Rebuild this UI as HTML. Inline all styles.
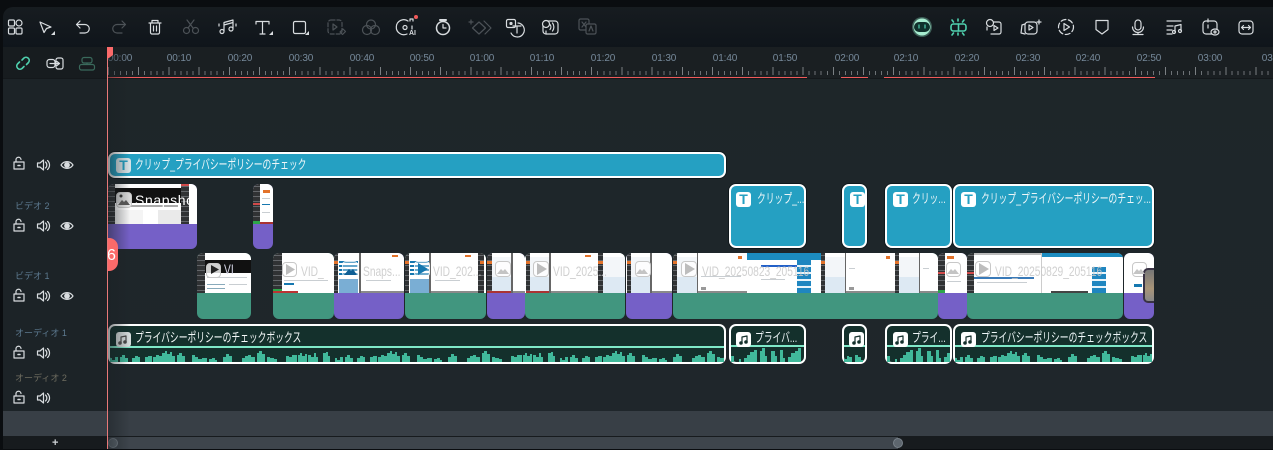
<!DOCTYPE html>
<html lang="ja"><head><meta charset="utf-8"><title>Timeline</title>
<style>
*{box-sizing:border-box}
html,body{margin:0;padding:0;width:1273px;height:449px;overflow:hidden;background:#0a0d10;font-family:"Liberation Sans","Noto Sans CJK JP",sans-serif}
div,span,svg{position:absolute}
#tb{left:3px;top:7px;width:1270px;height:40px;background:linear-gradient(#171c20,#0f151b);border-radius:10px 0 0 0}
#ctl{left:3px;top:47px;width:104px;height:31px;background:#171c1f}
#rul{left:108px;top:47px;width:1165px;height:31px;background:#1a1f22;overflow:hidden}
#tk1{left:0;top:24px;width:1165px;height:4px;background:repeating-linear-gradient(90deg,#6d7276 0 1px,transparent 1px 6.04px)}
#tk2{left:0;top:20px;width:1165px;height:8px;background:repeating-linear-gradient(90deg,#7a7f83 0 1px,transparent 1px 30.2px)}
.rl{top:5px;font-size:10px;color:#76899a;transform:translateX(-50%);white-space:nowrap;line-height:13px;letter-spacing:-.1px}
.rd{top:77px;height:2px;background:#f05a5a}
#lft{left:3px;top:78px;width:104px;height:358px;background:#1c2327}
#trk{left:108px;top:78px;width:1165px;height:333px;background:linear-gradient(#1e2629,#1f262b)}
.lb{left:15px;font-size:9px;line-height:12px;white-space:nowrap;color:#5d7a90}
.c{overflow:hidden;border-radius:6px}
.tc{background:#25a0c2;border:2px solid #fff;border-radius:7px;box-shadow:0 0 0 1px #10181c}
.ac{background:#14302c;border:2px solid #fff;border-radius:7px;overflow:hidden}
.ic{width:15px;height:15px;border-radius:3px;background:#fff;color:#25a0c2;font:bold 14px/15px "Liberation Sans",sans-serif;text-align:center}
.tx{color:#eef6f8;font-size:13px;line-height:16px;white-space:nowrap;transform-origin:0 50%;transform:scaleX(.675)}
.f{top:0;height:40px;overflow:hidden;background:#fff}
.d{top:0;height:40px;background:repeating-linear-gradient(#303234 0 2px,#63666a 2px 3px,#303234 3px 5px)}
.g{top:38px;height:2px;background:#8a8a8a}
.k{background:#111}
.l{background:#c9ced2;height:1px}
.bl{top:0;height:40px;background:linear-gradient(#fff 0 4px,#f3f6f9 4px 24px,#dde9f3 24px)}
.o{background:#e2722a;height:3px;width:7px}
.pb{width:16px;height:16px;top:8px;border:1px solid #c8c8c8;border-radius:4px;background:rgba(255,255,255,.8)}
.vt{font-size:14px;line-height:16px;color:rgba(200,200,200,.85);white-space:nowrap;transform-origin:0 50%;transform:scaleX(.73);top:10px}
.cb{background:repeating-linear-gradient(#1f86c0 0 5px,#e8f4fa 5px 7px)}
</style></head><body>
<div id="tb"></div>
<div id="ctl"></div>
<div id="rul">
<div id="tk1"></div><div id="tk2"></div>
<span class="rl" style="left:12px">00:00</span><span class="rl" style="left:71px">00:10</span><span class="rl" style="left:132px">00:20</span><span class="rl" style="left:193px">00:30</span><span class="rl" style="left:254px">00:40</span><span class="rl" style="left:314px">00:50</span><span class="rl" style="left:374px">01:00</span><span class="rl" style="left:434px">01:10</span><span class="rl" style="left:495px">01:20</span><span class="rl" style="left:556px">01:30</span><span class="rl" style="left:617px">01:40</span><span class="rl" style="left:677px">01:50</span><span class="rl" style="left:739px">02:00</span><span class="rl" style="left:798px">02:10</span><span class="rl" style="left:859px">02:20</span><span class="rl" style="left:920px">02:30</span><span class="rl" style="left:980px">02:40</span><span class="rl" style="left:1041px">02:50</span><span class="rl" style="left:1102px">03:00</span><span class="rl" style="left:1166px">03:10</span>
</div>
<div class="rd" style="left:108px;width:699px"></div><div class="rd" style="left:841px;width:27px"></div><div class="rd" style="left:884px;width:271px"></div>
<div id="lft"></div><div id="trk"></div>
<div style="left:3px;top:78px;width:1270px;height:1px;background:#14181b"></div>
<div style="left:3px;top:411px;width:1270px;height:25px;background:#383f46"></div>
<div style="left:3px;top:436px;width:1270px;height:13px;background:#171b1e"></div>
<div style="left:108px;top:437px;width:790px;height:12px;background:#3e454c"></div>
<div style="left:108px;top:438px;width:10px;height:10px;border-radius:50%;background:#5d666e;border:1px solid #79828a"></div>
<div style="left:893px;top:438px;width:10px;height:10px;border-radius:50%;background:#5d666e;border:1px solid #79828a"></div>
<span style="left:52px;top:437px;color:#cfd3d6;font-size:11px;line-height:13px;font-weight:bold">+</span>

<span class="lb" style="top:200px">ビデオ 2</span>
<span class="lb" style="top:270px">ビデオ 1</span>
<span class="lb" style="top:327px">オーディオ 1</span>
<span class="lb" style="top:372px;color:#6f6d60">オーディオ 2</span>

<!-- title clip -->
<div class="tc" style="left:108px;top:152px;width:618px;height:26px"></div>
<div class="ic" style="left:116px;top:158px;background:#d7e2e6">T</div>
<span class="tx" style="left:135px;top:157px">クリップ_プライバシーポリシーのチェック</span>

<!-- video 2 -->
<div class="c" style="left:108px;top:184px;width:89px;height:65px;background:#7560c7">
 <div class="f" style="left:0;width:89px"><div class="d" style="left:0;width:7px"></div><div class="k" style="left:7px;top:4px;width:66px;height:15px"></div><div style="left:10px;top:21px;width:60px;height:2px;background:#aaa"></div><div style="left:7px;top:26px;width:28px;height:14px;background:#f4f4f4"></div><div style="left:50px;top:26px;width:23px;height:14px;background:#eaeaea"></div><div class="d" style="left:73px;width:8px"></div><div style="left:73px;top:0;width:8px;height:2px;background:#d14a4a"></div></div>
 <div class="pb" style="left:8px;top:8px;background:rgba(240,240,240,.9)"></div>
 <span class="vt" style="left:27px;top:8px;color:#fff;transform:none;letter-spacing:.6px">Snapshot_5</span>
</div>
<div class="c" style="left:253px;top:184px;width:20px;height:65px;background:#7560c7">
 <div class="f" style="left:0;width:20px"><div class="d" style="left:0;width:7px"></div><div class="o" style="left:10px;top:6px"></div><div class="l" style="left:9px;top:14px;width:8px"></div><div class="l" style="left:9px;top:20px;width:8px;background:#1678b0"></div><div class="l" style="left:9px;top:28px;width:8px"></div><div style="left:0;top:37px;width:7px;height:3px;background:#2da64a"></div><div style="left:0;top:19px;width:7px;height:2px;background:#d14a4a"></div><div style="left:7px;top:38px;width:13px;height:2px;background:#a33"></div></div>
</div>

<!-- video 1 -->
<div class="c" style="left:197px;top:253px;width:54px;height:66px;background:#41967f">
 <div class="f" style="left:0;width:54px"><div class="d" style="left:0;width:8px"></div><div class="k" style="left:8px;top:7px;width:46px;height:13px"></div><div class="l" style="left:10px;top:24px;width:40px"></div><div class="l" style="left:10px;top:31px;width:18px;background:#8ab"></div><div class="l" style="left:32px;top:31px;width:18px"></div><div class="l" style="left:10px;top:35px;width:18px;background:#8ab"></div></div>
 <div class="pb" style="left:9px;top:10px;width:15px;height:15px"></div>
 <span class="vt" style="left:27px;top:8px;color:#dde">VI</span>
</div>
<div class="c" style="left:273px;top:253px;width:61px;height:66px;background:#41967f">
 <div class="f" style="left:0;width:61px"><div class="d" style="left:0;width:9px"></div><div class="l" style="left:11px;top:27px;width:44px"></div><div style="left:0;top:38px;width:25px;height:2px;background:#b33"></div><div style="left:0;top:36px;width:9px;height:2px;background:#2da64a"></div><div class="l" style="left:11px;top:30px;width:10px;background:#1678b0;height:2px"></div></div>
 <div class="pb" style="left:9px;top:9px;width:15px;height:15px"></div><span class="vt" style="left:28px">VID_</span>
</div>
<div class="c" style="left:334px;top:253px;width:70px;height:66px;background:#7560c7">
 <div class="f" style="left:0;width:70px"><div class="d" style="left:0;width:4px"></div><div class="o" style="left:0;top:8px;width:4px"></div><div style="left:5px;top:8px;width:19px;height:16px;background:repeating-linear-gradient(#1678b0 0 2px,#fff 2px 4px)"></div><div style="left:5px;top:26px;width:19px;height:14px;background:#7aaed4"></div><div style="left:25px;top:0;width:2px;height:40px;background:#666"></div><div class="l" style="left:32px;top:27px;width:25px"></div><div class="g" style="left:27px;width:43px"></div><div style="left:58px;top:2px;width:6px;height:2px;background:#e2722a"></div></div>
 <div class="pb" style="left:8px;top:8px;background:rgba(255,255,255,.35);border-color:rgba(255,255,255,.7)"></div><span class="vt" style="left:29px">Snaps...</span>
</div>
<div class="c" style="left:405px;top:253px;width:81px;height:66px;background:#41967f">
 <div class="f" style="left:0;width:81px"><div class="d" style="left:0;width:4px"></div><div class="o" style="left:0;top:8px;width:4px"></div><div style="left:5px;top:8px;width:19px;height:16px;background:repeating-linear-gradient(#1678b0 0 2px,#fff 2px 4px)"></div><div style="left:5px;top:26px;width:19px;height:14px;background:#7aaed4"></div><div style="left:24px;top:0;width:2px;height:40px;background:#666"></div><div class="d" style="left:73px;width:6px"></div><div class="o" style="left:75px;top:8px;width:4px"></div><div class="l" style="left:30px;top:27px;width:25px"></div><div class="g" style="left:26px;width:47px"></div><div style="left:60px;top:2px;width:6px;height:2px;background:#e2722a"></div></div>
 <div class="pb" style="left:9px;top:8px;background:rgba(255,255,255,.4);border-color:rgba(255,255,255,.8)"></div><span class="vt" style="left:28px">VID_202...</span>
</div>
<div class="c" style="left:487px;top:253px;width:38px;height:66px;background:#7560c7">
 <div class="f" style="left:0;width:38px"><div class="d" style="left:0;width:5px"></div><div class="o" style="left:0;top:8px;width:5px"></div><div class="bl" style="left:5px;width:19px"></div><div class="d" style="left:24px;width:2px;background:#666"></div><div class="g" style="left:26px;width:12px"></div><div style="left:0;top:38px;width:24px;height:2px;background:#a33"></div></div>
 <div class="pb" style="left:8px"></div>
</div>
<div class="c" style="left:525px;top:253px;width:100px;height:66px;background:#41967f">
 <div class="f" style="left:0;width:100px"><div class="d" style="left:1px;width:4px"></div><div class="o" style="left:1px;top:8px;width:4px"></div><div class="bl" style="left:5px;width:19px"></div><div class="d" style="left:24px;width:2px;background:#666"></div><div class="d" style="left:73px;width:5px"></div><div class="o" style="left:73px;top:8px;width:5px"></div><div class="bl" style="left:78px;width:22px"></div><div class="g" style="left:26px;width:47px"></div><div style="left:1px;top:38px;width:23px;height:2px;background:#a33"></div><div style="left:60px;top:2px;width:6px;height:2px;background:#e2722a"></div></div>
 <div class="pb" style="left:8px"></div><span class="vt" style="left:28px">VID_2025...</span>
</div>
<div class="c" style="left:626px;top:253px;width:46px;height:66px;background:#7560c7">
 <div class="f" style="left:0;width:46px"><div class="d" style="left:1px;width:4px"></div><div class="o" style="left:1px;top:8px;width:4px"></div><div class="bl" style="left:5px;width:19px"></div><div class="d" style="left:24px;width:2px;background:#666"></div><div class="g" style="left:26px;width:20px"></div></div>
 <div class="pb" style="left:9px"></div>
</div>
<div class="c" style="left:673px;top:253px;width:265px;height:66px;background:#41967f">
 <div class="f" style="left:0;width:265px">
 <div class="d" style="left:0;width:4px"></div><div class="o" style="left:0;top:8px;width:4px"></div><div class="bl" style="left:4px;width:20px"></div><div class="d" style="left:24px;width:1px;background:#666"></div><div class="o" style="left:65px;top:3px;width:4px"></div><div class="g" style="left:25px;width:49px"></div><div class="l" style="left:28px;top:23px;width:40px"></div><div style="left:28px;top:34px;width:5px;height:3px;background:#999"></div>
 <div style="left:74px;top:0;width:74px;height:7px;background:#1c8cc0"></div><div style="left:124px;top:7px;width:14px;height:33px" class="cb"></div><div style="left:88px;top:12px;width:36px;height:2px;background:#2260c8"></div><div class="l" style="left:88px;top:26px;width:24px"></div>
 <div class="d" style="left:148px;width:4px"></div><div class="o" style="left:148px;top:8px;width:4px"></div><div class="bl" style="left:152px;width:20px"></div><div class="d" style="left:172px;width:1px;background:#666"></div><div class="g" style="left:173px;width:49px"></div><div class="o" style="left:213px;top:3px;width:4px"></div><div class="l" style="left:176px;top:15px;width:6px"></div><div style="left:176px;top:34px;width:5px;height:3px;background:#999"></div>
 <div class="d" style="left:222px;width:4px"></div><div class="o" style="left:222px;top:8px;width:4px"></div><div class="bl" style="left:226px;width:20px"></div><div class="d" style="left:246px;width:1px;background:#666"></div><div class="g" style="left:247px;width:18px"></div><div class="l" style="left:250px;top:15px;width:6px"></div>
 </div>
 <div class="pb" style="left:8px"></div><span class="vt" style="left:29px">VID_20250823_205116</span>
</div>
<div class="c" style="left:938px;top:253px;width:29px;height:66px;background:#7560c7">
 <div class="f" style="left:0;width:29px"><div class="d" style="left:0;width:7px"></div><div class="o" style="left:9px;top:3px"></div><div style="left:0;top:19px;width:7px;height:2px;background:#d14a4a"></div><div style="left:0;top:37px;width:7px;height:3px;background:#2da64a"></div><div class="l" style="left:9px;top:28px;width:14px"></div></div>
 <div class="pb" style="left:8px;width:15px;height:15px;top:9px"></div>
</div>
<div class="c" style="left:967px;top:253px;width:156px;height:66px;background:#41967f">
 <div class="f" style="left:0;width:156px"><div class="d" style="left:0;width:7px"></div><div style="left:0;top:19px;width:7px;height:2px;background:#d14a4a"></div><div style="left:7px;top:0;width:67px;height:2px;background:#bbb"></div><div style="left:7px;top:24px;width:60px;height:2px;background:#3a7ab8"></div><div class="l" style="left:10px;top:29px;width:50px"></div><div style="left:74px;top:0;width:82px;height:4px;background:#1c8cc0"></div><div style="left:125px;top:14px;width:14px;height:26px" class="cb"></div><div style="left:84px;top:38px;width:37px;height:2px;background:#444"></div><div style="left:74px;top:0;width:1px;height:40px;background:#ccc"></div></div>
 <div class="pb" style="left:8px"></div><span class="vt" style="left:28px">VID_20250829_205116</span>
</div>
<div class="c" style="left:1124px;top:253px;width:30px;height:66px;background:#7560c7">
 <div class="f" style="left:0;width:30px"><div class="pb" style="left:8px;top:9px;width:15px;height:15px"></div><div style="left:10px;top:31px;width:8px;height:3px;background:#1678b0"></div></div>
 <div style="left:19px;top:15px;width:11px;height:35px;background:linear-gradient(#777,#a89478 60%,#888);border:2px solid #3a3345;border-right:0;border-radius:5px 0 0 5px"></div>
</div>

<!-- text clips -->
<div class="tc" style="left:729px;top:184px;width:77px;height:64px"></div>
<div class="ic" style="left:736px;top:192px">T</div><span class="tx" style="left:757px;top:191px">クリップ_...</span>
<div class="tc" style="left:842px;top:184px;width:25px;height:64px"></div>
<div class="ic" style="left:850px;top:192px">T</div>
<div class="tc" style="left:885px;top:184px;width:67px;height:64px"></div>
<div class="ic" style="left:893px;top:192px">T</div><span class="tx" style="left:912px;top:191px">クリッ...</span>
<div class="tc" style="left:953px;top:184px;width:201px;height:64px"></div>
<div class="ic" style="left:961px;top:192px">T</div><span class="tx" style="left:981px;top:191px">クリップ_プライバシーポリシーのチェッ...</span>

<!-- waveform defs + audio -->
<svg width="0" height="0" style="left:0;top:0"><defs>
<pattern id="w" width="225" height="14" patternUnits="userSpaceOnUse"><path fill="#41b99b" d="M0 14V10H2V12H5V9H8V14H10V9H12V7H15V10H18V14H22V10H25V8H28V9H30V14H35V9H38V8H42V14H43V9H46V7H49V8H52V5H55V3H57V6H60V4H62V8H65V14H67V7H69V5H72V8H75V14H82V7H85V9H88V11H92V10H97V14H99V11H102V10H105V12H107V14H113V9H116V6H119V8H122V14H132V10H135V8H138V7H141V9H145V14H147V5H149V3H152V6H155V14H157V9H160V10H164V11H167V14H176V8H179V9H182V7H187V14H188V7H190V5H192V8H195V6H197V14H198V7H201V9H204V5H206V9H208V14H213V5H216V4H218V8H220V14H225Z"/></pattern>
<pattern id="w2" width="90" height="15" patternUnits="userSpaceOnUse"><path fill="#41b99b" d="M0 15V9H3V15H8V12H10V15H13V11H16V8H19V5H23V3H26V15H29V4H31V1H34V9H36V15H40V4H44V9H46V15H49V3H52V11H54V15H57V10H60V6H64V4H67V1H70V15H75V6H77V2H80V8H83V3H86V12H88V15H90Z"/></pattern>
</defs></svg>
<div class="ac" style="left:108px;top:324px;width:618px;height:40px"></div>
<div style="left:110px;top:346px;width:614px;height:2px;background:#7fe8c8"></div>
<svg style="left:110px;top:348px" width="614" height="14"><rect width="614" height="14" fill="url(#w)"/></svg>
<div class="ic" style="left:116px;top:332px;background:#d7dcdc"></div><span class="tx" style="left:135px;top:330px;color:#f4f8f8">プライバシーポリシーのチェックボックス</span>
<div class="ac" style="left:729px;top:324px;width:77px;height:40px"></div>
<div style="left:731px;top:345px;width:73px;height:2px;background:#7fe8c8"></div>
<svg style="left:731px;top:347px" width="73" height="15"><rect width="73" height="15" fill="url(#w2)"/></svg>
<div class="ic" style="left:736px;top:332px"></div><span class="tx" style="left:755px;top:330px">プライバ...</span>
<div class="ac" style="left:842px;top:324px;width:25px;height:40px"></div>
<div style="left:844px;top:345px;width:21px;height:2px;background:#7fe8c8"></div>
<svg style="left:844px;top:347px" width="21" height="15"><path fill="#41b99b" d="M0 15V12h3V9h2v1h3v5h3V8h3v2h3v3h2v2z"/></svg>
<div class="ic" style="left:849px;top:332px"></div>
<div class="ac" style="left:885px;top:324px;width:67px;height:40px"></div>
<div style="left:887px;top:345px;width:63px;height:2px;background:#7fe8c8"></div>
<svg style="left:887px;top:347px" width="63" height="15"><rect width="63" height="15" fill="url(#w2)"/></svg>
<div class="ic" style="left:893px;top:332px"></div><span class="tx" style="left:912px;top:330px">プライ...</span>
<div class="ac" style="left:953px;top:324px;width:201px;height:40px"></div>
<div style="left:955px;top:345px;width:197px;height:2px;background:#7fe8c8"></div>
<svg style="left:955px;top:348px" width="197" height="14"><rect width="197" height="14" fill="url(#w)"/></svg>
<div class="ic" style="left:961px;top:332px"></div><span class="tx" style="left:981px;top:330px">プライバシーポリシーのチェックボックス</span>

<!-- left shade -->
<div style="left:108px;top:47px;width:22px;height:402px;background:linear-gradient(90deg,rgba(26,32,36,.5),rgba(26,32,36,0))"></div>

<!-- marker + playhead -->
<div style="left:108px;top:238px;width:10px;height:33px;background:#fb6a6a;border-radius:0 9px 9px 0"></div>
<span style="left:107px;top:247px;color:#fff;font-size:16px;line-height:18px">6</span>
<div style="left:107px;top:47px;width:1px;height:402px;background:#e87878"></div>
<svg style="left:107px;top:47px" width="7" height="11"><path fill="#fb6a6a" d="M0 0h6v8l-4 3H0z"/></svg>

<!-- icons -->
<svg style="left:0;top:0" width="1273" height="449" fill="none" stroke="#d8dcdf" stroke-width="1.2" stroke-linecap="round" stroke-linejoin="round">
<defs>
<g id="lk"><rect x="-5" y="-2" width="10" height="7"/><path d="M-3-2v-2a2.500 2.500 0 0 1 5-.5"/><path d="M-1 1.500h2" stroke-width="1.500"/></g>
<g id="sp"><path d="M-5.500-2h2.500l3.500-3v10l-3.500-3h-2.500z"/><path d="M2.500-3a4 4 0 0 1 0 6M4.500-4.500a6 6 0 0 1 0 9"/></g>
<g id="ey"><path d="M-6 0c3-4.500 9-4.500 12 0c-3 4.500-9 4.500-12 0z"/><circle r="2.300" fill="#d8dcdf"/></g>
</defs>
<!-- top left toolbar -->
<rect x="8.500" y="20" width="6" height="6" rx="1.200"/><circle cx="19" cy="23" r="3"/><rect x="8.500" y="28" width="6" height="6" rx="1.200"/><rect x="16" y="28" width="6" height="6" rx="1.200"/>
<path d="M40 22l11 5-4.500 1.500-2.500 4z"/><path d="M55 31v4h-4z" fill="#d8dcdf" stroke="none"/>
<path d="M80 21l-3.500 3.500L80 28M76.500 24.500H85a4 4 0 0 1 0 8.500h-5"/>
<path stroke="#4c5257" d="M122 21l3.500 3.500L122 28M125.500 24.500H117a4 4 0 0 0 0 8.500h5"/>
<path d="M149 23h12M152 23v-2.500h6V23M150.500 23v9.500a1.500 1.500 0 0 0 1.500 1.500h6a1.500 1.500 0 0 0 1.500-1.500V23M153.500 26v5M156.500 26v5"/>
<g stroke="#4c5257"><circle cx="186.500" cy="30.500" r="3"/><circle cx="195.500" cy="30.500" r="3"/><path d="M188 28l6-8M193 28l-6-8"/></g>
<path d="M224 31v-8.500l9-2.500v8.500M224 25l9-2.500"/><circle cx="222" cy="31.500" r="2"/><circle cx="231" cy="29" r="2"/><path d="M219 24v2M236 24v2"/>
<path d="M256 24v-2.500h13V24M262.500 21.500V34M260 34h5"/><path d="M273 31v4h-4z" fill="#d8dcdf" stroke="none"/>
<rect x="293.500" y="21.500" width="12" height="12" rx="1.500"/><path d="M309 31v4h-4z" fill="#d8dcdf" stroke="none"/>
<g stroke="#4c5257"><rect x="328" y="20" width="14" height="14" rx="3" stroke-dasharray="4 2"/><path d="M333 24v6l4-3z"/><path d="M340 32l3-3 2.500 2.500-3 3z"/>
<circle cx="371" cy="24.500" r="4.500"/><circle cx="367" cy="30" r="4.500"/><circle cx="375" cy="30" r="4.500"/></g>
<path d="M408 21a7.500 7.500 0 1 0-1 13"/><circle cx="405" cy="27.500" r="2"/><path d="M410 21v-2h3v2M412 26v3"/>
<text x="409" y="35" font-family="Liberation Sans" font-size="7" font-weight="bold" fill="#d8dcdf" stroke="none">AI</text>
<circle cx="416" cy="17" r="2" fill="#f05a5a" stroke="none"/>
<circle cx="443" cy="28" r="6.500" stroke-width="1.500"/><path d="M440 20h6" stroke-width="2"/><path d="M443 24.500V28h3"/>
<g stroke="#4c5257"><path d="M479 22l6.500 6-6.500 6-6.500-6z"/><path d="M484 21l7 7-6 6"/><path d="M471 20v4M469 22h4"/></g>
<rect x="506.500" y="19.500" width="9" height="8" rx="1.500"/><circle cx="511" cy="23.500" r="1" fill="#d8dcdf"/><path d="M518 23a7 7 0 1 1-7 10"/><path d="M513 26h8M517 26v7"/>
<rect x="543" y="21" width="15" height="13" rx="3"/><circle cx="546" cy="24" r="3.500" fill="#14191d"/><path d="M550 24.500a4 4 0 0 1 0 5M552.500 23a6.500 6.500 0 0 1 0 8"/><path d="M546 31v3"/>
<g stroke="#4c5257"><rect x="579" y="19" width="10" height="11" rx="1.500"/><rect x="586" y="24" width="10" height="10" rx="1.500" fill="#14191d"/><path d="M582 22l4 5M586 22l-4 5"/><path d="M589 31l2-5 2 5"/></g>
<!-- top right -->
<circle cx="922" cy="27" r="10" fill="#8fe8c8" fill-opacity=".35" stroke="none"/><circle cx="922" cy="27" r="8.500" fill="#a6eccf" stroke="none"/><rect x="914" y="22" width="16" height="10" rx="5" fill="#10312c" stroke="none"/><path d="M919 25v3M925 25v3" stroke="#4fd0ae"/>
<g stroke="#4fd0ae" stroke-width="1.600"><rect x="951" y="24" width="15" height="7" rx="2.500"/><path d="M958.500 24v7M958 19v2M958 33v2M952 20l1.500 2M964 20l-1.500 2M952 35l1.500-2M964 35l-1.500-2"/></g>
<circle cx="990" cy="23" r="3.500"/><path d="M994 22h5a2 2 0 0 1 2 2v8a2 2 0 0 1-2 2h-8M987 27v3"/><path d="M994 25.500v5l4-2.500z"/>
<rect x="1025" y="22" width="12" height="12" rx="3"/><path d="M1025 24l-3 1-1 8 4 1"/><path d="M1029 25v5l4-2.500z"/><path d="M1039 20v4M1037 22h4"/>
<circle cx="1066" cy="27" r="7.500" stroke-dasharray="5 2.500"/><path d="M1064 23.500v7l5.500-3.500z"/>
<path d="M1096 20.500h12v9l-6 4.500-6-4.500z"/>
<rect x="1135" y="20" width="6" height="10" rx="3"/><path d="M1132.500 27a5.500 5.500 0 0 0 11 0M1138 33v1M1133 34.500h10"/>
<path d="M1167 21h14M1167 26h6M1167 30h5M1167 34h5"/><path d="M1175 32v-6l6-1.500v6"/><circle cx="1174" cy="32" r="1.500"/><circle cx="1180" cy="31" r="1.500"/>
<rect x="1203" y="21" width="14" height="13" rx="3"/><path d="M1208 19v3M1208 25v3"/><ellipse cx="1215" cy="32" rx="4" ry="3" fill="#14191d"/><circle cx="1215" cy="32" r="1"/>
<rect x="1239" y="21" width="14" height="13" rx="3"/><path d="M1242 27.500h8M1243.500 25.500l-2 2 2 2M1248.500 25.500l2 2-2 2"/>
<!-- ctl -->
<g stroke="#4fd0ae" stroke-width="1.600"><path d="M22 60l2-2a3.200 3.200 0 0 1 4.500 4.500l-2 2"/><path d="M24 66.500l-2 2a3.200 3.200 0 0 1-4.500-4.500l2-2"/></g>
<rect x="47" y="59.500" width="8" height="8" rx="2.500"/><rect x="56" y="58" width="7" height="11" rx="2"/><path d="M50 63.500h9M57 61.500l2.500 2-2.500 2"/>
<g stroke="#3a6a5c"><rect x="82" y="57.500" width="10" height="5.500" rx="2"/><rect x="79.500" y="64.500" width="15" height="5.500" rx="2"/><path d="M87 63v1.500"/></g>
<!-- tracks -->
<use href="#lk" x="19" y="164"/><use href="#sp" x="43" y="165"/><use href="#ey" x="67" y="165"/>
<use href="#lk" x="19" y="226"/><use href="#sp" x="43" y="226"/><use href="#ey" x="67" y="226"/>
<use href="#lk" x="19" y="296"/><use href="#sp" x="43" y="296"/><use href="#ey" x="67" y="296"/>
<use href="#lk" x="19" y="353"/><use href="#sp" x="43" y="353"/>
<use href="#lk" x="19" y="398"/><use href="#sp" x="43" y="398"/>
<!-- clip glyphs: play triangles -->
<g stroke="none" fill="#bdbdbd">
<path d="M286 264v11l9-5.500z"/><path d="M418 263v12l10-6z" fill="#1678b0"/><path d="M537 263v12l10-6z"/><path d="M685 263v12l10-6z"/><path d="M979 263v12l10-6z"/><path d="M211 265v9l8-4.500z" fill="#222"/>
</g>
<!-- clip glyphs: image mountains -->
<g stroke="none" fill="#c4c4c4">
<path d="M118 205l4-5 2 2 2-2 4 5z" fill="#555"/><circle cx="121" cy="196" r="1.500" fill="#333"/>
<path d="M344 275l5-6 2 2 2-2 4 6z" fill="#0f5f95"/><path d="M497 274l4-5 2 2 2-2 4 5z"/><path d="M636 274l4-5 2 2 2-2 4 5z"/><path d="M947 274l4-5 2 2 2-2 4 5z"/><path d="M1133 274l4-5 2 2 2-2 4 5z"/>
</g>
<!-- music notes on icons -->
<g stroke="#444" stroke-width="1.200"><path d="M121 343v-6l5-1v6"/><circle cx="120" cy="343" r="1.200" fill="#444"/><circle cx="125" cy="342" r="1.200" fill="#444"/></g>
<g stroke="#14302c" stroke-width="1.200" fill="#14302c"><path d="M742 343v-6l5-1v6" fill="none"/><circle cx="741" cy="343" r="1.200"/><circle cx="746" cy="342" r="1.200"/>
<path d="M855 343v-6l5-1v6" fill="none"/><circle cx="854" cy="343" r="1.200"/><circle cx="859" cy="342" r="1.200"/>
<path d="M898 343v-6l5-1v6" fill="none"/><circle cx="897" cy="343" r="1.200"/><circle cx="902" cy="342" r="1.200"/>
<path d="M966 343v-6l5-1v6" fill="none"/><circle cx="965" cy="343" r="1.200"/><circle cx="970" cy="342" r="1.200"/></g>
</svg>
</body></html>
